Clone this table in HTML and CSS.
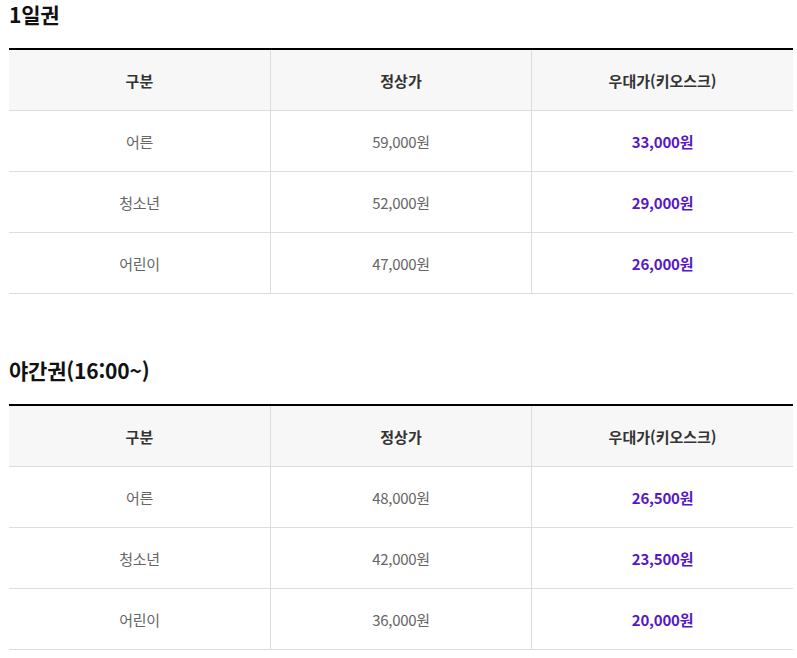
FILE: index.html
```html
<!DOCTYPE html>
<html lang="ko">
<head>
<meta charset="utf-8">
<link rel="stylesheet" href="styles.css">
</head>
<body>
<div class="wrap">
  <section class="block">
    <h2 class="title">1일권</h2>
    <table class="price">
      <thead>
        <tr><th>구분</th><th>정상가</th><th>우대가(키오스크)</th></tr>
      </thead>
      <tbody>
        <tr><td>어른</td><td>59,000원</td><td class="deal">33,000원</td></tr>
        <tr><td>청소년</td><td>52,000원</td><td class="deal">29,000원</td></tr>
        <tr><td>어린이</td><td>47,000원</td><td class="deal">26,000원</td></tr>
      </tbody>
    </table>
  </section>
  <section class="block second">
    <h2 class="title">야간권(16:00~)</h2>
    <table class="price">
      <thead>
        <tr><th>구분</th><th>정상가</th><th>우대가(키오스크)</th></tr>
      </thead>
      <tbody>
        <tr><td>어른</td><td>48,000원</td><td class="deal">26,500원</td></tr>
        <tr><td>청소년</td><td>42,000원</td><td class="deal">23,500원</td></tr>
        <tr><td>어린이</td><td>36,000원</td><td class="deal">20,000원</td></tr>
      </tbody>
    </table>
  </section>
</div>
</body>
</html>
```
FILE: styles.css
```css
html, body {
  margin: 0;
  padding: 0;
  background: #fff;
}
body {
  font-family: "Noto Sans CJK KR", "Noto Sans", sans-serif;
}
.wrap {
  margin-left: 9px;
  width: 784px;
}
.title {
  margin: 0 0 20px;
  font-size: 21px;
  line-height: 28px;
  font-weight: 700;
  color: #111;
  letter-spacing: -0.2px;
}
.second {
  margin-top: 62px;
}
.price {
  width: 100%;
  border-collapse: collapse;
  table-layout: fixed;
  border-top: 2px solid #000;
}
.price th,
.price td {
  height: 60px;
  padding: 0;
  text-align: center;
  vertical-align: middle;
  border-bottom: 1px solid #dddddd;
  border-left: 1px solid #dddddd;
  font-size: 15px;
  letter-spacing: -0.3px;
}
.price th:first-child,
.price td:first-child {
  border-left: none;
}
.price th {
  background: #f7f7f7;
  color: #333;
  font-weight: 700;
  letter-spacing: 0;
}
.price td {
  color: #666;
  font-weight: 400;
}
.price td.deal {
  color: #5618c4;
  font-weight: 700;
  letter-spacing: -0.2px;
}
```
